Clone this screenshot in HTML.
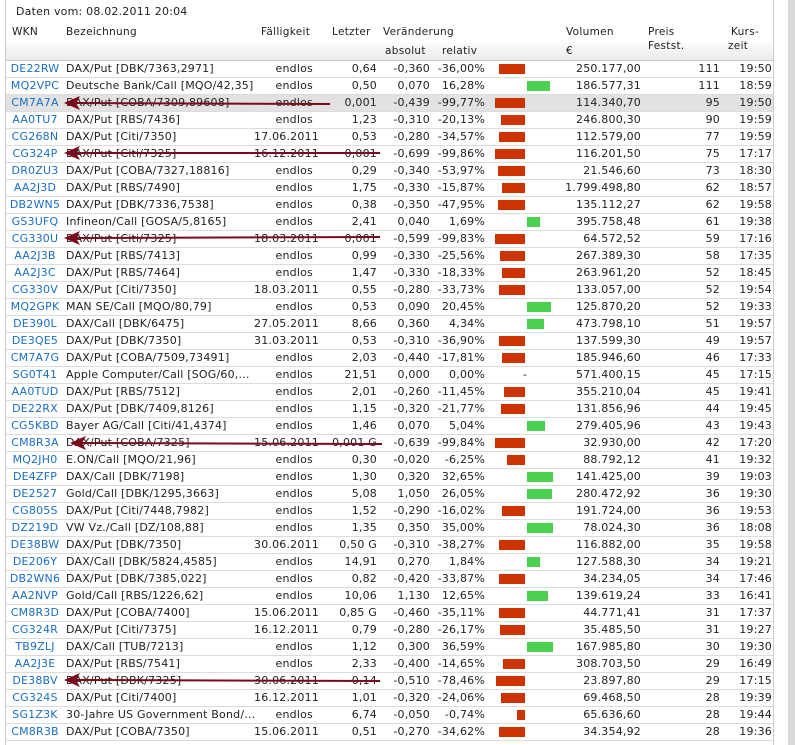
<!DOCTYPE html>
<html><head><meta charset="utf-8">
<style>
html,body{margin:0;padding:0;background:#fff;}
body{width:795px;height:745px;position:relative;overflow:hidden;font-family:"DejaVu Sans","Liberation Sans",sans-serif;font-size:11px;letter-spacing:0.2px;color:#222;}
.lb{position:absolute;left:5px;top:0;width:1px;height:745px;background:#ccc;}
.rb{position:absolute;left:773px;top:0;width:1px;height:745px;background:#ccc;}
.sb{position:absolute;left:788px;top:0;width:7px;height:745px;background:#dadada;}
.date{position:absolute;left:16px;top:5px;font-size:11px;}
.hd{position:absolute;left:6px;top:20px;width:767px;height:40px;background:linear-gradient(#fff 0,#fff 20px,#f6f6f6 28px,#ececec 40px);border-bottom:1px solid #c8c8c8;font-size:10.5px;letter-spacing:0.3px;}
.hd span{position:absolute;white-space:nowrap;}
table{position:absolute;left:6px;top:61px;border-collapse:collapse;table-layout:fixed;width:767px;}
td{height:16px;padding:0;border-bottom:1px solid #dcdcdc;white-space:nowrap;overflow:visible;line-height:16px;}
td.w{text-align:center;color:#1a6fc4;}
td.b{padding-left:2px;overflow:hidden;}
td.r{text-align:right;padding-right:3px;}
td.rel{padding-right:5px;}
td.k{padding-right:1px;}
tr.g td{background:#e2e2e2;}
.bar{position:relative;height:16px;}
.bar i{position:absolute;top:3px;height:10px;}
.bar i.n{right:35px;background:#cc3300;}
.bar i.p{left:37px;background:#4cd050;}
.bar b{position:absolute;right:33px;top:0;font-weight:normal;}
svg{position:absolute;left:0;top:0;}
</style></head><body>
<div class="lb"></div><div class="rb"></div><div class="sb"></div>
<div class="date">Daten vom: 08.02.2011 20:04</div>
<div class="hd">
<span style="left:6px;top:6px">WKN</span>
<span style="left:60px;top:6px">Bezeichnung</span>
<span style="left:255px;top:6px">Fälligkeit</span>
<span style="left:326px;top:6px">Letzter</span>
<span style="left:377px;top:6px">Veränderung</span>
<span style="left:379px;top:25px">absolut</span>
<span style="left:436px;top:25px">relativ</span>
<span style="left:560px;top:6px">Volumen</span>
<span style="left:560px;top:25px">€</span>
<span style="left:642px;top:6px">Preis</span>
<span style="left:642px;top:20px">Festst.</span>
<span style="left:725px;top:6px">Kurs-</span>
<span style="left:722px;top:20px">zeit</span>
</div>
<table>
<colgroup><col style="width:58px"><col style="width:190px"><col style="width:62px"><col style="width:64px"><col style="width:53px"><col style="width:57px"><col style="width:70px"><col style="width:84px"><col style="width:79px"><col style="width:50px"></colgroup>
<tr><td class="w">DE22RW</td><td class="b">DAX/Put [DBK/7363,2971]</td><td class="r">endlos</td><td class="r">0,64</td><td class="r">-0,360</td><td class="r rel">-36,00%</td><td><div class="bar"><i class="n" style="width:26px"></i></div></td><td class="r">250.177,00</td><td class="r">111</td><td class="r k">19:50</td></tr>
<tr><td class="w">MQ2VPC</td><td class="b">Deutsche Bank/Call [MQO/42,35]</td><td class="r">endlos</td><td class="r">0,50</td><td class="r">0,070</td><td class="r rel">16,28%</td><td><div class="bar"><i class="p" style="width:23px"></i></div></td><td class="r">186.577,31</td><td class="r">111</td><td class="r k">18:59</td></tr>
<tr class="g"><td class="w">CM7A7A</td><td class="b">DAX/Put [COBA/7309,89608]</td><td class="r">endlos</td><td class="r">0,001</td><td class="r">-0,439</td><td class="r rel">-99,77%</td><td><div class="bar"><i class="n" style="width:30px"></i></div></td><td class="r">114.340,70</td><td class="r">95</td><td class="r k">19:50</td></tr>
<tr><td class="w">AA0TU7</td><td class="b">DAX/Put [RBS/7436]</td><td class="r">endlos</td><td class="r">1,23</td><td class="r">-0,310</td><td class="r rel">-20,13%</td><td><div class="bar"><i class="n" style="width:24px"></i></div></td><td class="r">246.800,30</td><td class="r">90</td><td class="r k">19:59</td></tr>
<tr><td class="w">CG268N</td><td class="b">DAX/Put [Citi/7350]</td><td class="r">17.06.2011</td><td class="r">0,53</td><td class="r">-0,280</td><td class="r rel">-34,57%</td><td><div class="bar"><i class="n" style="width:26px"></i></div></td><td class="r">112.579,00</td><td class="r">77</td><td class="r k">19:59</td></tr>
<tr><td class="w">CG324P</td><td class="b">DAX/Put [Citi/7325]</td><td class="r">16.12.2011</td><td class="r">0,001</td><td class="r">-0,699</td><td class="r rel">-99,86%</td><td><div class="bar"><i class="n" style="width:30px"></i></div></td><td class="r">116.201,50</td><td class="r">75</td><td class="r k">17:17</td></tr>
<tr><td class="w">DR0ZU3</td><td class="b">DAX/Put [COBA/7327,18816]</td><td class="r">endlos</td><td class="r">0,29</td><td class="r">-0,340</td><td class="r rel">-53,97%</td><td><div class="bar"><i class="n" style="width:27px"></i></div></td><td class="r">21.546,60</td><td class="r">73</td><td class="r k">18:30</td></tr>
<tr><td class="w">AA2J3D</td><td class="b">DAX/Put [RBS/7490]</td><td class="r">endlos</td><td class="r">1,75</td><td class="r">-0,330</td><td class="r rel">-15,87%</td><td><div class="bar"><i class="n" style="width:23px"></i></div></td><td class="r">1.799.498,80</td><td class="r">62</td><td class="r k">18:57</td></tr>
<tr><td class="w">DB2WN5</td><td class="b">DAX/Put [DBK/7336,7538]</td><td class="r">endlos</td><td class="r">0,38</td><td class="r">-0,350</td><td class="r rel">-47,95%</td><td><div class="bar"><i class="n" style="width:27px"></i></div></td><td class="r">135.112,27</td><td class="r">62</td><td class="r k">19:58</td></tr>
<tr><td class="w">GS3UFQ</td><td class="b">Infineon/Call [GOSA/5,8165]</td><td class="r">endlos</td><td class="r">2,41</td><td class="r">0,040</td><td class="r rel">1,69%</td><td><div class="bar"><i class="p" style="width:13px"></i></div></td><td class="r">395.758,48</td><td class="r">61</td><td class="r k">19:38</td></tr>
<tr><td class="w">CG330U</td><td class="b">DAX/Put [Citi/7325]</td><td class="r">18.03.2011</td><td class="r">0,001</td><td class="r">-0,599</td><td class="r rel">-99,83%</td><td><div class="bar"><i class="n" style="width:30px"></i></div></td><td class="r">64.572,52</td><td class="r">59</td><td class="r k">17:16</td></tr>
<tr><td class="w">AA2J3B</td><td class="b">DAX/Put [RBS/7413]</td><td class="r">endlos</td><td class="r">0,99</td><td class="r">-0,330</td><td class="r rel">-25,56%</td><td><div class="bar"><i class="n" style="width:25px"></i></div></td><td class="r">267.389,30</td><td class="r">58</td><td class="r k">17:35</td></tr>
<tr><td class="w">AA2J3C</td><td class="b">DAX/Put [RBS/7464]</td><td class="r">endlos</td><td class="r">1,47</td><td class="r">-0,330</td><td class="r rel">-18,33%</td><td><div class="bar"><i class="n" style="width:23px"></i></div></td><td class="r">263.961,20</td><td class="r">52</td><td class="r k">18:45</td></tr>
<tr><td class="w">CG330V</td><td class="b">DAX/Put [Citi/7350]</td><td class="r">18.03.2011</td><td class="r">0,55</td><td class="r">-0,280</td><td class="r rel">-33,73%</td><td><div class="bar"><i class="n" style="width:26px"></i></div></td><td class="r">133.057,00</td><td class="r">52</td><td class="r k">19:54</td></tr>
<tr><td class="w">MQ2GPK</td><td class="b">MAN SE/Call [MQO/80,79]</td><td class="r">endlos</td><td class="r">0,53</td><td class="r">0,090</td><td class="r rel">20,45%</td><td><div class="bar"><i class="p" style="width:24px"></i></div></td><td class="r">125.870,20</td><td class="r">52</td><td class="r k">19:33</td></tr>
<tr><td class="w">DE390L</td><td class="b">DAX/Call [DBK/6475]</td><td class="r">27.05.2011</td><td class="r">8,66</td><td class="r">0,360</td><td class="r rel">4,34%</td><td><div class="bar"><i class="p" style="width:17px"></i></div></td><td class="r">473.798,10</td><td class="r">51</td><td class="r k">19:57</td></tr>
<tr><td class="w">DE3QE5</td><td class="b">DAX/Put [DBK/7350]</td><td class="r">31.03.2011</td><td class="r">0,53</td><td class="r">-0,310</td><td class="r rel">-36,90%</td><td><div class="bar"><i class="n" style="width:26px"></i></div></td><td class="r">137.599,30</td><td class="r">49</td><td class="r k">19:57</td></tr>
<tr><td class="w">CM7A7G</td><td class="b">DAX/Put [COBA/7509,73491]</td><td class="r">endlos</td><td class="r">2,03</td><td class="r">-0,440</td><td class="r rel">-17,81%</td><td><div class="bar"><i class="n" style="width:23px"></i></div></td><td class="r">185.946,60</td><td class="r">46</td><td class="r k">17:33</td></tr>
<tr><td class="w">SG0T41</td><td class="b">Apple Computer/Call [SOG/60,...</td><td class="r">endlos</td><td class="r">21,51</td><td class="r">0,000</td><td class="r rel">0,00%</td><td><div class="bar"><b>-</b></div></td><td class="r">571.400,15</td><td class="r">45</td><td class="r k">17:15</td></tr>
<tr><td class="w">AA0TUD</td><td class="b">DAX/Put [RBS/7512]</td><td class="r">endlos</td><td class="r">2,01</td><td class="r">-0,260</td><td class="r rel">-11,45%</td><td><div class="bar"><i class="n" style="width:21px"></i></div></td><td class="r">355.210,04</td><td class="r">45</td><td class="r k">19:41</td></tr>
<tr><td class="w">DE22RX</td><td class="b">DAX/Put [DBK/7409,8126]</td><td class="r">endlos</td><td class="r">1,15</td><td class="r">-0,320</td><td class="r rel">-21,77%</td><td><div class="bar"><i class="n" style="width:24px"></i></div></td><td class="r">131.856,96</td><td class="r">44</td><td class="r k">19:45</td></tr>
<tr><td class="w">CG5KBD</td><td class="b">Bayer AG/Call [Citi/41,4374]</td><td class="r">endlos</td><td class="r">1,46</td><td class="r">0,070</td><td class="r rel">5,04%</td><td><div class="bar"><i class="p" style="width:18px"></i></div></td><td class="r">279.405,96</td><td class="r">43</td><td class="r k">19:43</td></tr>
<tr><td class="w">CM8R3A</td><td class="b">DAX/Put [COBA/7325]</td><td class="r">15.06.2011</td><td class="r">0,001 G</td><td class="r">-0,639</td><td class="r rel">-99,84%</td><td><div class="bar"><i class="n" style="width:30px"></i></div></td><td class="r">32.930,00</td><td class="r">42</td><td class="r k">17:20</td></tr>
<tr><td class="w">MQ2JH0</td><td class="b">E.ON/Call [MQO/21,96]</td><td class="r">endlos</td><td class="r">0,30</td><td class="r">-0,020</td><td class="r rel">-6,25%</td><td><div class="bar"><i class="n" style="width:18px"></i></div></td><td class="r">88.792,12</td><td class="r">41</td><td class="r k">19:32</td></tr>
<tr><td class="w">DE4ZFP</td><td class="b">DAX/Call [DBK/7198]</td><td class="r">endlos</td><td class="r">1,30</td><td class="r">0,320</td><td class="r rel">32,65%</td><td><div class="bar"><i class="p" style="width:26px"></i></div></td><td class="r">141.425,00</td><td class="r">39</td><td class="r k">19:03</td></tr>
<tr><td class="w">DE2527</td><td class="b">Gold/Call [DBK/1295,3663]</td><td class="r">endlos</td><td class="r">5,08</td><td class="r">1,050</td><td class="r rel">26,05%</td><td><div class="bar"><i class="p" style="width:25px"></i></div></td><td class="r">280.472,92</td><td class="r">36</td><td class="r k">19:30</td></tr>
<tr><td class="w">CG805S</td><td class="b">DAX/Put [Citi/7448,7982]</td><td class="r">endlos</td><td class="r">1,52</td><td class="r">-0,290</td><td class="r rel">-16,02%</td><td><div class="bar"><i class="n" style="width:23px"></i></div></td><td class="r">191.724,00</td><td class="r">36</td><td class="r k">19:53</td></tr>
<tr><td class="w">DZ219D</td><td class="b">VW Vz./Call [DZ/108,88]</td><td class="r">endlos</td><td class="r">1,35</td><td class="r">0,350</td><td class="r rel">35,00%</td><td><div class="bar"><i class="p" style="width:26px"></i></div></td><td class="r">78.024,30</td><td class="r">36</td><td class="r k">18:08</td></tr>
<tr><td class="w">DE38BW</td><td class="b">DAX/Put [DBK/7350]</td><td class="r">30.06.2011</td><td class="r">0,50 G</td><td class="r">-0,310</td><td class="r rel">-38,27%</td><td><div class="bar"><i class="n" style="width:26px"></i></div></td><td class="r">116.882,00</td><td class="r">35</td><td class="r k">19:58</td></tr>
<tr><td class="w">DE206Y</td><td class="b">DAX/Call [DBK/5824,4585]</td><td class="r">endlos</td><td class="r">14,91</td><td class="r">0,270</td><td class="r rel">1,84%</td><td><div class="bar"><i class="p" style="width:13px"></i></div></td><td class="r">127.588,30</td><td class="r">34</td><td class="r k">19:21</td></tr>
<tr><td class="w">DB2WN6</td><td class="b">DAX/Put [DBK/7385,022]</td><td class="r">endlos</td><td class="r">0,82</td><td class="r">-0,420</td><td class="r rel">-33,87%</td><td><div class="bar"><i class="n" style="width:26px"></i></div></td><td class="r">34.234,05</td><td class="r">34</td><td class="r k">17:46</td></tr>
<tr><td class="w">AA2NVP</td><td class="b">Gold/Call [RBS/1226,62]</td><td class="r">endlos</td><td class="r">10,06</td><td class="r">1,130</td><td class="r rel">12,65%</td><td><div class="bar"><i class="p" style="width:21px"></i></div></td><td class="r">139.619,24</td><td class="r">33</td><td class="r k">16:41</td></tr>
<tr><td class="w">CM8R3D</td><td class="b">DAX/Put [COBA/7400]</td><td class="r">15.06.2011</td><td class="r">0,85 G</td><td class="r">-0,460</td><td class="r rel">-35,11%</td><td><div class="bar"><i class="n" style="width:26px"></i></div></td><td class="r">44.771,41</td><td class="r">31</td><td class="r k">17:37</td></tr>
<tr><td class="w">CG324R</td><td class="b">DAX/Put [Citi/7375]</td><td class="r">16.12.2011</td><td class="r">0,79</td><td class="r">-0,280</td><td class="r rel">-26,17%</td><td><div class="bar"><i class="n" style="width:25px"></i></div></td><td class="r">35.485,50</td><td class="r">31</td><td class="r k">19:27</td></tr>
<tr><td class="w">TB9ZLJ</td><td class="b">DAX/Call [TUB/7213]</td><td class="r">endlos</td><td class="r">1,12</td><td class="r">0,300</td><td class="r rel">36,59%</td><td><div class="bar"><i class="p" style="width:26px"></i></div></td><td class="r">167.985,80</td><td class="r">30</td><td class="r k">19:30</td></tr>
<tr><td class="w">AA2J3E</td><td class="b">DAX/Put [RBS/7541]</td><td class="r">endlos</td><td class="r">2,33</td><td class="r">-0,400</td><td class="r rel">-14,65%</td><td><div class="bar"><i class="n" style="width:22px"></i></div></td><td class="r">308.703,50</td><td class="r">29</td><td class="r k">16:49</td></tr>
<tr><td class="w">DE38BV</td><td class="b">DAX/Put [DBK/7325]</td><td class="r">30.06.2011</td><td class="r">0,14</td><td class="r">-0,510</td><td class="r rel">-78,46%</td><td><div class="bar"><i class="n" style="width:29px"></i></div></td><td class="r">23.897,80</td><td class="r">29</td><td class="r k">17:15</td></tr>
<tr><td class="w">CG324S</td><td class="b">DAX/Put [Citi/7400]</td><td class="r">16.12.2011</td><td class="r">1,01</td><td class="r">-0,320</td><td class="r rel">-24,06%</td><td><div class="bar"><i class="n" style="width:24px"></i></div></td><td class="r">69.468,50</td><td class="r">28</td><td class="r k">19:39</td></tr>
<tr><td class="w">SG1Z3K</td><td class="b">30-Jahre US Government Bond/...</td><td class="r">endlos</td><td class="r">6,74</td><td class="r">-0,050</td><td class="r rel">-0,74%</td><td><div class="bar"><i class="n" style="width:8px"></i></div></td><td class="r">65.636,60</td><td class="r">28</td><td class="r k">19:44</td></tr>
<tr><td class="w">CM8R3B</td><td class="b">DAX/Put [COBA/7350]</td><td class="r">15.06.2011</td><td class="r">0,51</td><td class="r">-0,270</td><td class="r rel">-34,62%</td><td><div class="bar"><i class="n" style="width:26px"></i></div></td><td class="r">34.354,92</td><td class="r">28</td><td class="r k">19:36</td></tr>
</table>
<svg width="795" height="745" viewBox="0 0 795 745">
<g stroke="#7d0a1c" stroke-width="2" fill="#7d0a1c">
<line x1="74" y1="103" x2="330" y2="104"/><path d="M64 103 L80 96 L76 103 L80 110 Z" stroke="none"/>
<line x1="74" y1="153" x2="380" y2="153"/><path d="M64 153 L80 146 L76 153 L80 160 Z" stroke="none"/>
<line x1="74" y1="238" x2="380" y2="237"/><path d="M64 238 L80 231 L76 238 L80 245 Z" stroke="none"/>
<line x1="80" y1="443" x2="382" y2="444"/><path d="M70 443 L86 436 L82 443 L86 450 Z" stroke="none"/>
<line x1="74" y1="680" x2="380" y2="681"/><path d="M64 680 L80 673 L76 680 L80 687 Z" stroke="none"/>
</g>
</svg>
</body></html>
